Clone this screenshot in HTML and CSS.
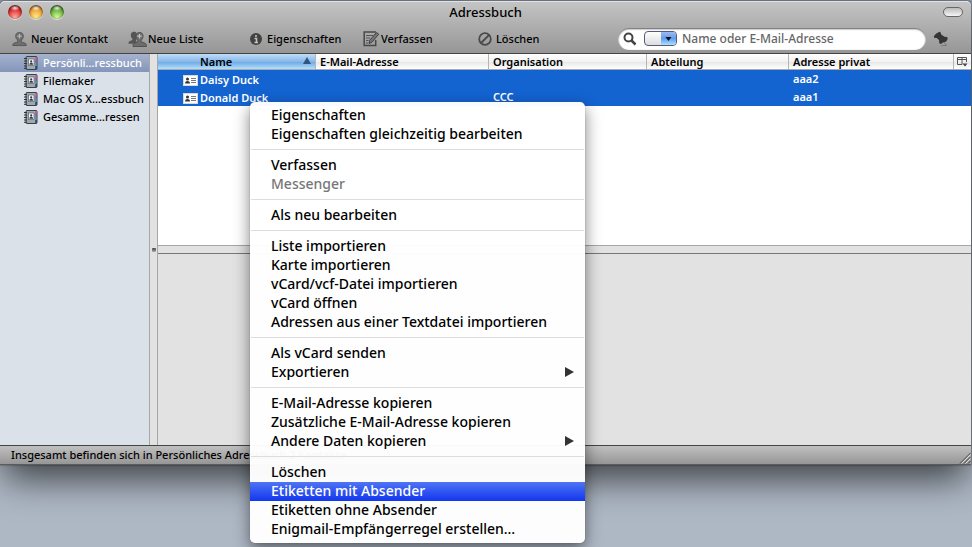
FILE: index.html
```html
<!DOCTYPE html>
<html lang="de">
<head>
<meta charset="utf-8">
<title>Adressbuch</title>
<link rel="stylesheet" href="styles.css">
</head>
<body>
<svg class="defs" aria-hidden="true">
  <defs>
    <symbol id="person" viewBox="0 0 16 16">
      <path d="M8 1c2.600 0 4.200 1.700 4.100 4-.1 1.900-.9 3.200-2.100 4.200v2l4 1.300c.9.300 1.200 1.200 1.200 2.500H.8c0-1.300.3-2.200 1.200-2.500l4-1.300v-2C4.800 8.200 4 6.900 3.900 5 3.800 2.700 5.400 1 8 1z" fill="#6e6e6e" stroke="#585858"/>
      <path d="M8 2.500v5M5.500 5h5" stroke="#b5b5b5" stroke-width="1.300"/>
    </symbol>
    <symbol id="book" viewBox="0 0 14 14">
      <rect x="2" y=".5" width="11" height="13" rx="1" fill="#8f979f" stroke="#3a4249"/>
      <rect x="3" y="1" width="8" height="12" fill="#9fa7af"/>
      <rect x="4.500" y="3" width="5.500" height="6.500" fill="#f4f6f8" stroke="#4b535b" stroke-width=".6"/>
      <circle cx="7.200" cy="5.300" r="1.100" fill="#333b44"/>
      <path d="M5.400 8.700c0-3 3.600-3 3.600 0z" fill="#333b44"/>
      <path d="M12 1v3" stroke="#d05590" stroke-width="1.300"/><path d="M12 4v3" stroke="#a04bc0" stroke-width="1.300"/><path d="M12 7v3" stroke="#2fa5a0" stroke-width="1.300"/><path d="M12 10v3" stroke="#28306a" stroke-width="1.300"/>
      <path d="M0 2.500h3M0 5h3M0 7.500h3M0 10h3M0 12.300h3" stroke="#333"/>
    </symbol>
    <symbol id="card" viewBox="0 0 15 11">
      <rect x=".5" y=".5" width="14" height="10" fill="#fff" stroke="#d8d8d8"/>
      <circle cx="4.500" cy="4" r="1.500" fill="#333"/>
      <path d="M2 8.500c0-3.300 5-3.300 5 0z" fill="#333"/>
      <path d="M8 3.500h5M8 5.500h5M8 7.500h5" stroke="#777"/>
    </symbol>
  </defs>
</svg>
<div class="window">
  <header class="chrome">
    <div class="titlebar">
      <div class="lights">
        <button class="light red" aria-label="Schließen"></button>
        <button class="light amber" aria-label="Minimieren"></button>
        <button class="light green" aria-label="Zoomen"></button>
      </div>
      <h1>Adressbuch</h1>
      <button class="pill" aria-label="Symbolleiste"></button>
    </div>
    <div class="toolbar">
      <button class="tool contact"><svg width="15" height="16"><use href="#person"/></svg>Neuer Kontakt</button>
      <button class="tool list"><svg width="19" height="16" viewBox="0 0 19 16">
        <path d="M6 .7c2.400 0 3.400 1.800 3.300 4L8 10l2 2.800H.5c0-1.500.2-2.200 1-2.600L4.300 9V7.700C3.300 6.700 2.800 5.700 2.800 4.200 2.800 2 4 .7 6 .7z" fill="#555"/>
        <path d="M11.500 1.500c2.300 0 3.600 1.500 3.500 3.800-.1 1.800-.8 3-1.800 3.900v1.500l4.300 1.800c.7.400 1 1.200 1 3H5c0-1.800.2-2.600 1-3l3.800-1.800V9.200C8.800 8.300 8.100 7 8 5.300c0-2.300 1.200-3.800 3.500-3.800z" fill="#6c6c6c" stroke="#525252"/>
        <path d="M11.500 3v4.500M9.200 5.200h4.600" stroke="#c0c0c0" stroke-width="1.300"/></svg>Neue Liste</button>
      <button class="tool props"><svg width="12" height="14" viewBox="0 0 12 14"><circle cx="6" cy="7" r="6" fill="#424242"/><path d="M6 3v2M4.500 6.500H6.500V10M4.500 10.500h3.500" stroke="#c5c5c5" stroke-width="1.500" fill="none"/></svg>Eigenschaften</button>
      <button class="tool compose"><svg width="16" height="16" viewBox="0 0 16 16"><path d="M13 1H1.200v13.500h11.500V9" fill="none" stroke="#484848" stroke-width="1.500"/><path d="M3 4.500h7M3 7h4M3 9.500h2.500M3 12h2" stroke="#555"/><path d="M6 12.500l.7-3.200L13.500 1.500l2.200 1.700L9 11.200z" fill="#777" stroke="#414141"/></svg>Verfassen</button>
      <button class="tool delete"><svg width="14" height="14" viewBox="0 0 14 14"><circle cx="7" cy="7" r="5.800" fill="none" stroke="#4a4a4a" stroke-width="1.800"/><path d="M3 11l8-8" stroke="#4a4a4a" stroke-width="1.800"/></svg>Löschen</button>
      <div class="search">
        <svg width="14" height="14" viewBox="0 0 14 14"><circle cx="5.500" cy="5.500" r="4" fill="none" stroke="#444" stroke-width="2"/><path d="M8.500 8.500l4 4" stroke="#444" stroke-width="2.500"/></svg>
        <button class="scope" aria-label="Suchbereich"><svg width="15" height="13" viewBox="0 0 15 13"><path d="M4.500 5h6L7.500 9z" fill="#111"/></svg></button>
        <input type="text" aria-label="Suche" placeholder="Name oder E-Mail-Adresse">
      </div>
      <svg class="pin" width="16" height="16" viewBox="0 0 16 16"><path d="M8 14.500h6" stroke="#7c7c7c"/><path d="M9.500 9.500l4 5" stroke="#777"/><path d="M5.500 1.200l1.800-.4.900 2.700 3.300 2.300 2.700.3.500 2-1.700 2.700-2.700.5-2.500 1.700-1.500-.8-.3-3.200-2.200-2-2.300.1L.8 5.300 3 2.800z" fill="#353535"/></svg>
    </div>
  </header>
  <main class="body">
    <nav class="sidebar">
      <a href="#" class="selected"><svg width="14" height="14"><use href="#book"/></svg>Persönli…ressbuch</a>
      <a href="#"><svg width="14" height="14"><use href="#book"/></svg>Filemaker</a>
      <a href="#"><svg width="14" height="14"><use href="#book"/></svg>Mac OS X…essbuch</a>
      <a href="#"><svg width="14" height="14"><use href="#book"/></svg>Gesamme…ressen</a>
    </nav>
    <div class="grip"><i></i></div>
    <section class="content">
      <div class="list-pane">
        <table>
          <colgroup><col class="c-name"><col class="c-mail"><col class="c-org"><col class="c-dep"><col><col class="c-pick"></colgroup>
          <thead><tr>
            <th class="sorted"><span>Name</span><svg width="8" height="7" viewBox="0 0 8 7"><path d="M4 0l4 7H0z" fill="#31567d"/></svg></th>
            <th>E-Mail-Adresse</th><th>Organisation</th><th>Abteilung</th><th>Adresse privat</th>
            <th class="pick"><button aria-label="Spalten"><svg width="11" height="10" viewBox="0 0 11 10"><path d="M5 7.500H.5v-7h9V5M.5 2.500h9M5 .5v7" fill="none" stroke="#555"/><path d="M5.500 6.500h5L8 9.500z" fill="#444"/></svg></button></th>
          </tr></thead>
          <tbody>
            <tr><td class="name"><svg width="15" height="11"><use href="#card"/></svg>Daisy Duck</td><td></td><td></td><td></td><td>aaa2</td><td></td></tr>
            <tr><td class="name"><svg width="15" height="11"><use href="#card"/></svg>Donald Duck</td><td></td><td>CCC</td><td></td><td>aaa1</td><td></td></tr>
          </tbody>
        </table>
      </div>
      <div class="splitter"></div>
      <div class="detail"></div>
    </section>
  </main>
  <footer class="status"><span>Insgesamt befinden sich in Persönliches Adressbuch 2 Kontakte</span>
    <svg width="12" height="12" viewBox="0 0 12 12"><path d="M1 11.500L11.500 1M5 11.500L11.500 5M9 11.500L11.500 9" stroke="#444"/><path d="M2.500 11.500L11.500 2.500M6.500 11.500L11.500 6.500" stroke="#ddd"/></svg>
  </footer>
</div>
<div class="menu" role="menu">
  <button role="menuitem">Eigenschaften</button>
  <button role="menuitem">Eigenschaften gleichzeitig bearbeiten</button>
  <hr>
  <button role="menuitem">Verfassen</button>
  <button role="menuitem" disabled>Messenger</button>
  <hr>
  <button role="menuitem">Als neu bearbeiten</button>
  <hr>
  <button role="menuitem">Liste importieren</button>
  <button role="menuitem">Karte importieren</button>
  <button role="menuitem">vCard/vcf-Datei importieren</button>
  <button role="menuitem">vCard öffnen</button>
  <button role="menuitem">Adressen aus einer Textdatei importieren</button>
  <hr>
  <button role="menuitem">Als vCard senden</button>
  <button role="menuitem">Exportieren<svg width="9" height="10" viewBox="0 0 9 10"><path d="M0 0l9 5-9 5z" fill="#333"/></svg></button>
  <hr>
  <button role="menuitem">E-Mail-Adresse kopieren</button>
  <button role="menuitem">Zusätzliche E-Mail-Adresse kopieren</button>
  <button role="menuitem">Andere Daten kopieren<svg width="9" height="10" viewBox="0 0 9 10"><path d="M0 0l9 5-9 5z" fill="#333"/></svg></button>
  <hr>
  <button role="menuitem">Löschen</button>
  <button role="menuitem" class="active">Etiketten mit Absender</button>
  <button role="menuitem">Etiketten ohne Absender</button>
  <button role="menuitem">Enigmail-Empfängerregel erstellen…</button>
</div>
</body>
</html>
```
FILE: styles.css
```css
* { box-sizing: border-box; }
html, body { height: 100%; }
body {
  margin: 0;
  overflow: hidden;
  display: flex;
  flex-direction: column;
  padding: 1px 1px 0 0;
  background: linear-gradient(#8690a4, #aeb8c5 85%);
  font: 500 11px/18px "Lucida Grande", "Noto Sans", "Open Sans", sans-serif;
  color: #000;
}
button, input {
  font: inherit;
  color: inherit;
  border: 0;
  padding: 0;
  margin: 0;
  background: none;
}
.defs { position: absolute; width: 0; height: 0; }
.window {
  flex: 0 0 85%;
  display: flex;
  flex-direction: column;
  border-radius: 5px 5px 0 0;
  box-shadow: 0 18px 36px -4px rgba(0, 0, 0, .65), 0 0 2px rgba(0, 0, 0, .6);
  background: #e2e2e2;
}
.chrome {
  border-top: 1px solid #e3e3e3;
  border-bottom: 1px solid #444;
  border-radius: 5px 5px 0 0;
  background: linear-gradient(#c4c4c4, #969696);
}
.titlebar {
  display: grid;
  grid-template-columns: 1fr auto 1fr;
  align-items: center;
  height: 20px;
  padding: 0 8px;
}
.titlebar h1 { margin: 0; font-size: 13px; font-weight: 500; line-height: 20px; }
.lights { display: flex; gap: 7px; }
.light {
  width: 14px;
  height: 14px;
  border-radius: 50%;
  box-shadow: inset 0 1px 3px rgba(0, 0, 0, .7), 0 1px 0 #ddd;
}
.red { background: radial-gradient(ellipse 5px 3px at 50% 20%, #fff, transparent), radial-gradient(circle at 50% 90%, #ffb0a8, #e02b2b 60%, #a01010); }
.amber { background: radial-gradient(ellipse 5px 3px at 50% 20%, #fff, transparent), radial-gradient(circle at 50% 90%, #fff08a, #f0a030 60%, #a85a08); }
.green { background: radial-gradient(ellipse 5px 3px at 50% 20%, #fff, transparent), radial-gradient(circle at 50% 90%, #d8ff9a, #64ae38 60%, #2c6a10); }
.pill {
  justify-self: end;
  width: 20px;
  height: 10px;
  border: 1px solid #666;
  border-radius: 5px;
  background: linear-gradient(#bbb, #f5f5f5);
}
.toolbar { display: flex; align-items: center; height: 31px; padding: 2px 22px 0 12px; }
.tool { display: flex; align-items: center; gap: 4px; height: 20px; white-space: nowrap; }
.tool svg { flex: none; }
.contact, .delete { flex: 0 0 116px; }
.list { flex: 0 0 122px; gap: 1px; }
.props { flex: 0 0 113px; gap: 5px; }
.compose { flex: 0 0 115px; gap: 2px; }
.search {
  flex: 1;
  display: flex;
  align-items: center;
  height: 22px;
  margin: 0 7px 0 24px;
  padding: 0 6px 0 5px;
  border-radius: 11px;
  background: #fff;
  box-shadow: inset 0 1px 2px #555;
}
.scope {
  display: flex;
  justify-content: flex-end;
  width: 33px;
  height: 15px;
  margin: 0 5px 0 7px;
  border: 1px solid #555c78;
  border-radius: 4px;
  overflow: hidden;
  background: linear-gradient(#fff, #ddd);
}
.scope svg { background: linear-gradient(#9fb8ee, #5f9df0 50%, #aee0ff); }
.search input { flex: 1; min-width: 0; outline: 0; font-size: 12px; }
.search input::placeholder { color: #666; opacity: 1; }
.body { flex: 1; display: flex; min-height: 0; }
.sidebar { flex: 0 0 149px; background: #dae1e9; }
.sidebar a {
  display: flex;
  align-items: center;
  gap: 5px;
  height: 18px;
  padding-left: 24px;
  color: #000;
  text-decoration: none;
  white-space: nowrap;
}
.sidebar .selected { background: linear-gradient(#a5b3ce, #8495bb); color: #fff; }
.grip {
  flex: 0 0 9px;
  display: flex;
  align-items: center;
  justify-content: center;
  border: solid #a6a6a6;
  border-width: 0 1px;
}
.grip i { width: 4px; height: 4px; border-radius: 1px; background: linear-gradient(#444, #aaa); }
.content { flex: 1; min-width: 0; display: flex; flex-direction: column; }
.list-pane { flex: 192 0 0; background: #fff; border-bottom: 1px solid #a6a6a6; }
.splitter { height: 7px; }
.detail { flex: 192 0 0; border-top: 1px solid #777; }
table { width: 100%; border-collapse: separate; border-spacing: 0; table-layout: fixed; }
.c-name { width: 158px; }
.c-mail { width: 173px; }
.c-org { width: 158px; }
.c-dep { width: 142px; }
.c-pick { width: 17px; }
th, td { height: 18px; padding: 0 0 0 4px; text-align: left; line-height: 18px; white-space: nowrap; font-weight: 600; }
th {
  height: 16px;
  line-height: 15px;
  border-bottom: 1px solid #aaa;
  box-shadow: inset -1px 0 #b5b5b5;
  background: linear-gradient(#fff, #f2f2f2 50%, #e6e6e6 51%, #fff);
}
th.sorted { padding-left: 42px; background: linear-gradient(#c2dcf4, #86b8ec 50%, #6aa7e6 51%, #b4e0fb); }
.sorted svg { float: right; margin: 3px 5px 0 0; }
th.pick { padding: 0 0 0 3px; box-shadow: none; }
.pick button, .pick svg { display: block; }
td { background: #1363d1; color: #fff; }
td.name { padding-left: 25px; line-height: 17px; }
.name svg { margin-right: 2px; vertical-align: -2px; }
.status {
  display: flex;
  align-items: center;
  justify-content: space-between;
  height: 20px;
  padding: 0 0 0 11px;
  border-top: 1px solid #444;
  border-bottom: 1px solid #5c5c5c;
  background: linear-gradient(#c0c0c0, #969696);
}
.status svg { align-self: flex-end; }
.menu {
  position: absolute;
  top: 102px;
  left: 250px;
  width: 335px;
  padding: 4px 0;
  border-radius: 5px;
  background: rgba(255, 255, 255, .97);
  box-shadow: 0 6px 16px rgba(0, 0, 0, .5), 0 0 1px #666;
  font-size: 14px;
}
.menu button {
  display: flex;
  align-items: center;
  justify-content: space-between;
  width: 100%;
  height: 19px;
  padding: 0 11px 2px 21px;
  line-height: 17px;
  white-space: nowrap;
}
.menu button:disabled { color: #777; }
.menu .active { background: linear-gradient(#4f74f4, #1236ee); color: #fff; }
.menu hr { height: 1px; margin: 5px 1px 6px; border: 0; background: #ddd; }
```
